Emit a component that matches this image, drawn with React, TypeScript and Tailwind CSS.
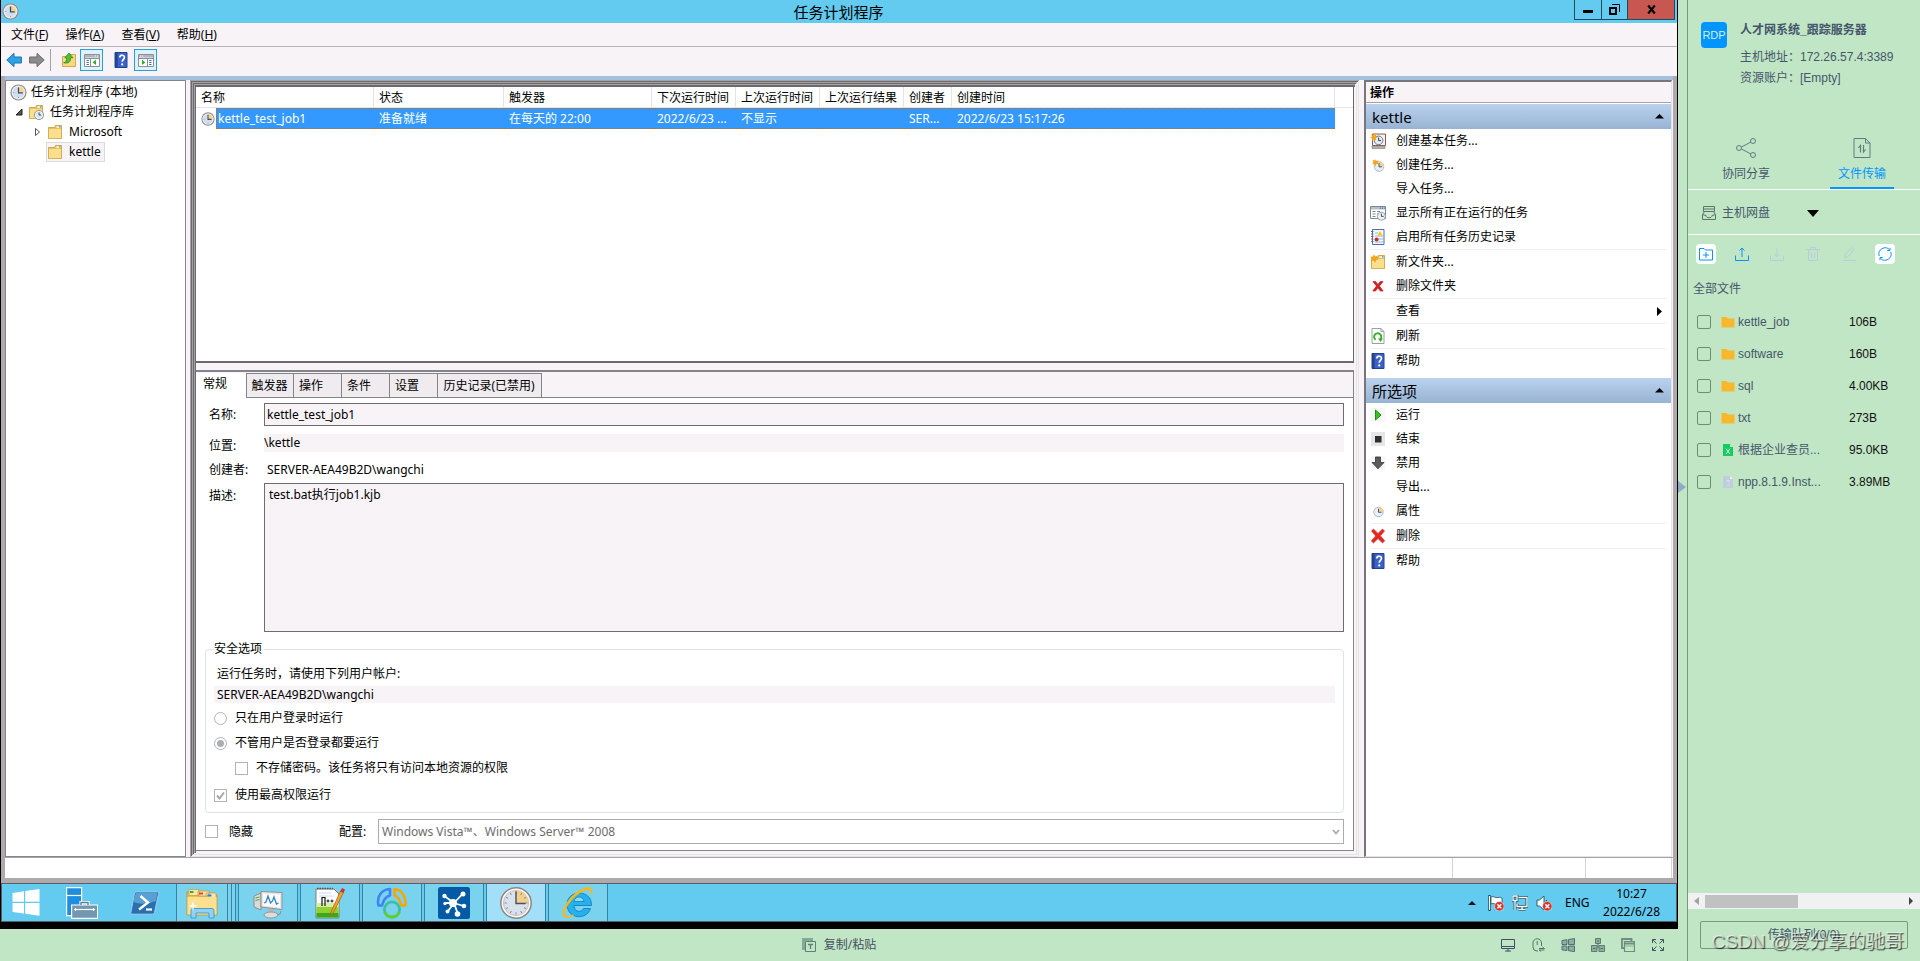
import React from 'react';
import clsx from 'clsx';

type IconProps = { className?: string };

function Svg({ size = 16, box = 16, className, children }: { size?: number; box?: number; className?: string; children: React.ReactNode }) {
  return (
    <svg width={size} height={size} viewBox={`0 0 ${box} ${box}`} fill="none" className={clsx('shrink-0', className)} aria-hidden="true">
      {children}
    </svg>
  );
}

/* ---------- small 16px icons ---------- */

function ClockIcon({ size = 16, className }: IconProps & { size?: number }) {
  return (
    <Svg size={size} className={className}>
      <circle cx="8" cy="8" r="7.600" fill="#8f8b88" />
      <circle cx="8" cy="8" r="6.500" fill="#efeded" />
      <circle cx="8" cy="8" r="5.400" fill="#cfdff0" />
      <path d="M8 8V2.600A5.400 5.400 0 0 1 13.400 8Z" fill="#f6d68a" />
      <path d="M8 3.200V8.400H12" stroke="#3d4a66" strokeWidth="1.200" />
      <path d="M8 12.200v1M3 8h1" stroke="#8a8f9c" strokeWidth=".8" />
    </Svg>
  );
}

function FolderIcon({ clock, star }: { clock?: boolean; star?: boolean }) {
  return (
    <Svg>
      <path d="M1.500 3.500h6l1-2h6v13h-13z" fill="#e9c25c" stroke="#c79b35" strokeWidth=".8" />
      <path d="M9.500 2.300h4.400v1.400H9.500z" fill="#fff" />
      <path d="M12 2.300h1.600v1.200H12z" fill="#3a8de0" />
      <path d="M1.900 5h12.200v9.200H1.900z" fill="#fadf8f" />
      {clock && (
        <g>
          <circle cx="11" cy="11" r="4.600" fill="#f5f5f3" stroke="#8b8b88" strokeWidth=".9" />
          <circle cx="11" cy="11" r="3.200" fill="#d7e8f5" />
          <path d="M11 8.400V11h2.200" stroke="#2d3f5d" strokeWidth=".9" />
        </g>
      )}
      {star && <path d="M4 0l1 2.600L7.600 1.400 6.500 4 9 5 6.400 6 5 9 3.800 6.600 1 7.200l1.200-2.400L.4 2.600l2.600.2z" fill="#f7a31a" />}
    </Svg>
  );
}

function HelpIcon() {
  return (
    <Svg>
      <path d="M2 .5h12v15H2z" fill="#3b62c9" stroke="#24428f" />
      <path d="M2 .5h2.600v15H2z" fill="#24428f" />
      <path d="M6.800 5.400c0-3 4.600-2.800 4.600 0 0 2-2.200 2-2.200 4.400" stroke="#fff" strokeWidth="1.700" />
      <circle cx="9.200" cy="12.400" r="1.100" fill="#fff" />
    </Svg>
  );
}

function PanelIcon({ flip }: { flip?: boolean }) {
  return (
    <Svg className={flip ? '-scale-x-100' : undefined}>
      <path d="M.5 2.500h15v12H.5z" fill="#fff" stroke="#8b9098" />
      <path d="M1 3h14v2.600H1z" fill="#aeb6c1" />
      <path d="M11 4h1M13 4h1" stroke="#fff" />
      <path d="M1 6.500h14M6.500 7v7" stroke="#8b9098" />
      <path d="M2.500 8.500h2.400M2.500 10.500h2.400M2.500 12.500h2.400" stroke="#3f73b8" />
      <path d="M12 7.800v5.200L8.600 10.400z" fill="#2fae29" />
    </Svg>
  );
}

function ArrowIcon({ flip, color, edge }: { flip?: boolean; color: string; edge: string }) {
  return (
    <Svg className={flip ? '-scale-x-100' : undefined}>
      <path d="M.8 8L8 1.400V5h7.400v6H8v3.600z" fill={color} stroke={edge} />
    </Svg>
  );
}

function UpFolderIcon() {
  return (
    <Svg>
      <path d="M1.500 4.500h7l1-2h5v12h-13z" fill="#f8d982" stroke="#c79b35" strokeWidth=".8" />
      <path d="M2.600 10.800c2.600-.4 3.200-2.400 3-5H3.800L8 1l4 4.800H9.600c.2 4-2 6-7 5z" fill="#4fc130" stroke="#23831a" strokeWidth=".7" />
    </Svg>
  );
}

function WizardIcon() {
  return (
    <Svg>
      <path d="M2.500 1h13v11.500h-13z" fill="#f4f1ee" stroke="#8c5a50" />
      <path d="M2 13h13v2.500H2z" fill="#b5b2b0" stroke="#7d7a78" strokeWidth=".6" />
      <circle cx="8.600" cy="7.400" r="4.300" fill="#e3edf6" stroke="#6f7d8c" />
      <path d="M8.600 4.600v3h2.400" stroke="#2d3f5d" />
      <path d="M3.500 0l.9 2.200 2.200-.9-.9 2.200 2.100 1-2.200.7.5 2.300-2.200-1.200L2 8l.2-2.500L0 4.600l2-1L1.200 1.300l2 .9z" fill="#f7a31a" />
    </Svg>
  );
}

function NewTaskIcon() {
  return (
    <Svg>
      <circle cx="9" cy="9.500" r="4.800" fill="#e7eef5" stroke="#b0b9c4" />
      <path d="M9 9.500V4.700a4.800 4.800 0 0 1 4.800 4.800z" fill="#f5d48b" />
      <path d="M9 6v3.800h3" stroke="#46546c" />
      <path d="M5 2l1 2 2.400-.8L7.600 5.400 9 7 6.400 7 5.400 9.500 4.400 7 2.200 7.200 3.500 5 2.500 2.800 4.500 3.600z" fill="#f7a31a" />
    </Svg>
  );
}

function RunningIcon() {
  return (
    <Svg>
      <path d="M.5 1.500h15v12H.5z" fill="#fff" stroke="#7c8794" />
      <path d="M1 2h14v2.500H1z" fill="#b4bfcc" />
      <path d="M10 3.200h1M12 3.200h1M14 3.200h.600" stroke="#2b5fa8" />
      <path d="M2.500 6.500h3M7 6.500h3M2.500 9h3M7 9h2M2.500 11.500h3" stroke="#7c8794" />
      <circle cx="11.400" cy="11.200" r="4" fill="#edf2f6" stroke="#8a9099" strokeWidth=".8" />
      <path d="M11.400 8.600v2.800h2.300" stroke="#2d3f5d" strokeWidth=".9" />
    </Svg>
  );
}

function HistoryIcon() {
  return (
    <Svg>
      <path d="M2.500.5h11.500v15H2.500z" fill="#f4f8fd" stroke="#4a71ad" />
      <path d="M1 2.500h2.500M1 5h2.500M1 7.500h2.500M1 10h2.500M1 12.500h2.500" stroke="#66727f" />
      <path d="M5 4h3M5 7h8M5 10h8M5 13h8" stroke="#7ea2d4" strokeWidth=".8" />
      <path d="M10 2l2.800 4.600H7.200z" fill="#f5cb23" />
      <circle cx="6.600" cy="10.600" r="2" fill="#d6262c" />
    </Svg>
  );
}

function RefreshPageIcon() {
  return (
    <Svg>
      <path d="M2 .5h9l3 3v12H2z" fill="#fff" stroke="#9aa0a6" />
      <path d="M11 .5v3h3" stroke="#9aa0a6" />
      <path d="M5.600 11.800A3.600 3.600 0 1 1 10.600 11" stroke="#33b226" strokeWidth="1.900" />
      <path d="M8 10.200l5 .2-2.500 3.600z" fill="#33b226" />
    </Svg>
  );
}

function CrossIcon({ big }: { big?: boolean }) {
  return (
    <Svg>
      {big ? (
        <path d="M1.500 3l2-2L8 5.400 12.500 1l2 2-4.100 4.800 4.300 5-2.200 2.200L8 10.600 3.500 15l-2.200-2 4.300-5.100z" fill="#e8261d" stroke="#c2423c" strokeWidth=".7" />
      ) : (
        <path d="M3 3.600h2.600l2.300 3 2.400-3H13l-3.600 4.500 3.700 4.900h-2.700L7.900 9.800 5.500 13H2.800l3.700-4.900z" fill="#cf2020" stroke="#cf2020" strokeWidth=".8" />
      )}
    </Svg>
  );
}

function PlayIcon() {
  return (
    <Svg>
      <path d="M1 1h14v14H1z" fill="#f7f7f7" />
      <path d="M5.500 3l5.500 5-5.500 5z" fill="#37c423" stroke="#228a16" />
    </Svg>
  );
}

function StopIcon() {
  return (
    <Svg>
      <path d="M1 1h14v14H1z" fill="#e6e6e6" />
      <path d="M5 5h6.500v6.500H5z" fill="#2f2f2f" />
    </Svg>
  );
}

function DisableIcon() {
  return (
    <Svg>
      <path d="M1 1h14v14H1z" fill="#f7f7f7" />
      <path d="M5.500 2h5v5.500h3.500L8 13.800 2 7.500h3.500z" fill="#5b5b5b" stroke="#333" strokeWidth=".8" />
    </Svg>
  );
}

function TinyClockIcon() {
  return (
    <Svg>
      <circle cx="8.500" cy="9" r="4.700" fill="#eaf1f8" stroke="#aab8c8" />
      <path d="M8.500 9V4.300A4.700 4.700 0 0 1 13.200 9z" fill="#f5d48b" />
      <path d="M8.500 5.800v3.500h3" stroke="#3c5684" />
    </Svg>
  );
}

/* ---------- task bar icons ---------- */

function WindowsLogo() {
  return (
    <svg width="28" height="27" viewBox="0 0 28 27" aria-hidden="true">
      <path d="M.5 4L12 2.200V12.800H.5zM13.200 2L27.500 0v12.800H13.200zM.5 14H12v10.600L.5 23zM13.200 14H27.500v12.800l-14.300-2z" fill="#fff" />
    </svg>
  );
}

function ServerManagerIcon() {
  return (
    <Svg size={32} box={32}>
      <path d="M.6.6h15v28H.6z" fill="#1e8fe0" stroke="#fff" strokeWidth="1.200" />
      <path d="M1 8.500h14" stroke="#fff" strokeWidth="1.200" />
      <path d="M15 18v-2.500h7V18" stroke="#fff" strokeWidth="3.200" />
      <path d="M5.600 18h26v13.400h-26z" fill="#7596af" stroke="#fff" strokeWidth="1.200" />
      <path d="M15 18v-2.500h7V18" stroke="#5d7d95" strokeWidth="1.400" />
      <path d="M8 22.500h21" stroke="#fff" strokeWidth="1.200" />
      <path d="M9.500 21v3M27.500 21v3" stroke="#fff" strokeWidth="1.200" />
    </Svg>
  );
}

function PowerShellIcon() {
  return (
    <svg width="30" height="24" viewBox="0 0 30 24" fill="none" aria-hidden="true">
      <path d="M6 .8h21.500q1.500 0 1.200 1.500L24.500 21.500q-.4 1.700-2 1.700H2q-1.500 0-1.200-1.500L4.500 2.300Q4.800.8 6 .8z" fill="#2a6fae" stroke="#9fd0f0" />
      <path d="M6 1.500h21.500L26 10Q14 15 3 11z" fill="#5a9fd2" />
      <path d="M10.500 5l7.500 6.500-9 7" stroke="#fff" strokeWidth="2.400" />
      <path d="M16 18.500h6" stroke="#fff" strokeWidth="2.200" />
    </svg>
  );
}

function ExplorerIcon() {
  return (
    <Svg size={32} box={32}>
      <path d="M1 5h12l2 3h16v20H1z" fill="#e8bf57" stroke="#b98f30" strokeWidth=".8" />
      <path d="M3 2.500h10v6H3zM12 4h11v5H12zM20 6h10v5H20z" fill="#fbe7a8" stroke="#c8a041" strokeWidth=".8" />
      <path d="M4 4h3.500v2H4z" fill="#25b03a" />
      <path d="M13 5.500h4v2h-4z" fill="#e0452b" />
      <path d="M21.500 7.500h4v2h-4z" fill="#2b7de0" />
      <path d="M1.500 10h29v17.500h-29z" fill="#fbe08f" />
      <path d="M5 31v-7.500q0-2 2-2h19q2 0 2 2V31h-5v-5H10v5z" fill="#8fd3f3" stroke="#4b9dcc" />
      <path d="M7 14l1 4 4 1-4 1-1 4-1-4-4-1 4-1z" fill="#fff" />
    </Svg>
  );
}

function MonitorChartIcon() {
  return (
    <Svg size={32} box={32}>
      <path d="M2 9l7-3v17l-7-3z" fill="#d9d9d9" stroke="#8e8e8e" />
      <path d="M3.500 11l4-1M3.500 13.500l4-1" stroke="#4da83d" />
      <path d="M9 4.500l21 1v17L9 20z" fill="#e6e6e6" stroke="#909090" />
      <path d="M11 6.500L28 7.500v13L11 18.500z" fill="#f8fbff" />
      <path d="M12 16l2-1 2-6 2.500 7 2-2 1.500-4 2.500 7 2-1" stroke="#3a84c9" strokeWidth="1.300" />
      <path d="M16 22h6v4h-6z" fill="#b6b6b6" />
      <ellipse cx="19" cy="28" rx="7" ry="3" fill="#dcdcdc" stroke="#999" />
      <path d="M25 28q4 0 4-4" stroke="#8e8e8e" />
    </Svg>
  );
}

function NotepadPlusIcon() {
  return (
    <Svg size={32} box={32}>
      <path d="M2 2h18l5 5v24H2z" fill="#fff" stroke="#7e7e7e" />
      <path d="M2.500 16h22v5.500h-22z" fill="#d6efa6" />
      <path d="M2.500 20h22v10.500h-22z" fill="#8fd12f" />
      <path d="M2.500 26h22v4.500h-22z" fill="#3fa51e" />
      <path d="M3 1.500h16" stroke="#555" strokeWidth="1.500" strokeDasharray="1.500 1" />
      <path d="M5 6h12M5 9h15" stroke="#b9d0e8" strokeWidth=".8" />
      <path d="M8 19v-8.500h3V19" stroke="#111" strokeWidth="1.200" />
      <path d="M12.500 14h3M14 12.500v3M16.500 14h3M18 12.500v3" stroke="#111" />
      <path d="M26.500 4l3 1.500L19 26l-2 1.500V25z" fill="#f2a52c" stroke="#a86415" strokeWidth=".8" />
      <path d="M28 1l3 1.500-1.500 3.500-3.300-1.500z" fill="#d12f3a" />
    </Svg>
  );
}

function NavicatIcon() {
  return (
    <Svg size={32} box={32}>
      <path d="M2.500 18.500C.5 10 5 2.500 14 2V8.500c-4 1-6.500 4-8 10z" stroke="#3d84f5" strokeWidth="2.600" strokeLinejoin="round" />
      <path d="M18.500 2c7 .5 11.500 7.500 11 16.500h-4C24 13 21.500 9.500 18.500 8.500z" stroke="#f7a600" strokeWidth="2.600" strokeLinejoin="round" />
      <circle cx="16" cy="22.500" r="7.600" stroke="#3dbfa0" strokeWidth="2.800" />
      <path d="M8.900 25.200a7.600 7.600 0 0 0 14.200 0" stroke="#5fcf2a" strokeWidth="2.800" />
    </Svg>
  );
}

function NodesIcon() {
  return (
    <Svg size={32} box={32}>
      <rect width="32" height="32" rx="2.500" fill="#045aa5" />
      <path d="M16 16L7 9.500M16 16l8-8.500M16 16H8M16 16l9.500 3M16 16l-6 8M16 16l3.500 10" stroke="#fff" strokeWidth="1.800" />
      <circle cx="15" cy="16" r="4" fill="#fff" />
      <circle cx="6.500" cy="9" r="2.200" fill="#fff" />
      <circle cx="25" cy="7" r="2.500" fill="#fff" />
      <circle cx="7" cy="16.500" r="1.700" fill="#fff" />
      <circle cx="26" cy="19" r="2.300" fill="#fff" />
      <circle cx="9.500" cy="24.500" r="2" fill="#fff" />
      <circle cx="19.500" cy="27" r="2.800" fill="#fff" />
    </Svg>
  );
}

function BigClockIcon() {
  const ticks = Array.from({ length: 12 }, (_, i) => i * 30);
  return (
    <Svg size={32} box={32}>
      <circle cx="16" cy="16" r="15.200" fill="#fbfbfb" stroke="#8d857d" strokeWidth="1.500" />
      <circle cx="16" cy="16" r="12.600" fill="#d9e1ec" stroke="#b9b4ae" strokeWidth=".8" />
      <path d="M16 16V3.500A12.500 12.500 0 0 1 28.500 16z" fill="#f0d08a" />
      {ticks.map((a) => (
        <path key={a} d="M16 4.500v2.200" stroke="#8b8b94" transform={`rotate(${a} 16 16)`} />
      ))}
      <path d="M16 4.500V16.500h9.500" stroke="#4a4f63" strokeWidth="1.400" />
    </Svg>
  );
}

function IeIcon() {
  return (
    <Svg size={32} box={32}>
      <path d="M28.500 21.500C24.500 34 5 32 5 17.500 5 2.500 30 1.500 29.500 18.500H12C12.500 26 20 25.500 21.500 21.500z" fill="#25b0ee" stroke="#1279b8" strokeWidth=".8" />
      <path d="M12 14.500h10c-.8-6-9.200-6-10 0z" fill="#8fd9f5" stroke="#1279b8" strokeWidth=".7" />
      <path d="M3 29.500C-2 25 9 8 22 2.500c6-2.500 8-.5 7 4" stroke="#f5b81f" strokeWidth="2.600" />
      <path d="M3 29.500c2.500 1.500 6 0 8.500-1.500" stroke="#f5b81f" strokeWidth="1.600" />
    </Svg>
  );
}

function ErrorBadge() {
  return (
    <g>
      <circle cx="11.300" cy="11.300" r="4.700" fill="#dd2f25" stroke="#fff" strokeWidth=".5" />
      <path d="M9.300 9.300l4 4M13.300 9.300l-4 4" stroke="#fff" strokeWidth="1.500" />
    </g>
  );
}

/* ---------- remote window ---------- */

const menus: [string, string][] = [['文件', 'F'], ['操作', 'A'], ['查看', 'V'], ['帮助', 'H']];

function TitleBar() {
  return (
    <header className="flex h-[23px] items-start bg-[#63cbf0]">
      <div className="flex h-full w-[102px] items-center pl-px"><ClockIcon size={17} /></div>
      <h1 className="min-w-0 flex-1 self-center text-center text-[15px] leading-5">任务计划程序</h1>
      <div className="flex h-5 border border-t-0 border-[#1f4b5c]">
        <button aria-label="最小化" className="flex w-[27px] items-center justify-center border-r border-[#1f4b5c]">
          <span className="mt-1 h-[3px] w-[10px] bg-black" />
        </button>
        <button aria-label="还原" className="flex w-[26px] items-center justify-center border-r border-[#1f4b5c]">
          <Svg size={11} box={11}>
            <path d="M1 4h6v6H1z" stroke="#000" strokeWidth="2" />
            <path d="M3 .5h7.500V8" stroke="#000" />
          </Svg>
        </button>
        <button aria-label="关闭" className="flex w-[46px] items-center justify-center bg-[#c75750]">
          <Svg size={9} box={9}><path d="M1.200.5l6.600 8M7.800.5l-6.600 8" stroke="#000" strokeWidth="2.200" /></Svg>
        </button>
      </div>
      <div className="w-[2px]" />
    </header>
  );
}

function Toolbar() {
  const pressed = 'flex h-[22px] w-[23px] items-center justify-center border border-[#26a0da] bg-[#dff1f9]';
  return (
    <div className="flex h-[29px] items-center pb-1 pl-[5px]">
      <button aria-label="后退" className="w-[23px]"><ArrowIcon color="#2fa2e6" edge="#1c71b8" /></button>
      <button aria-label="前进" className="w-[21px]"><ArrowIcon flip color="#8b8b8b" edge="#6a6a6a" /></button>
      <span className="h-[22px] w-px bg-[#a5a3a5]" />
      <button aria-label="上移" className="ml-2 w-[21px] pl-[2px]"><UpFolderIcon /></button>
      <button aria-label="显示/隐藏控制台树" className={pressed}><PanelIcon /></button>
      <button aria-label="帮助" className="ml-[10px] w-[21px]"><HelpIcon /></button>
      <button aria-label="显示/隐藏操作窗格" className={pressed}><PanelIcon flip /></button>
    </div>
  );
}

function Tree() {
  return (
    <nav className="w-[181px] shrink-0 border border-[#85848f] bg-white pt-px">
      <ul className="leading-5">
        <li className="flex h-5 items-center gap-1 pl-1"><ClockIcon size={17} />任务计划程序 (本地)</li>
        <li className="flex h-5 items-center pl-[9px]">
          <Svg size={8} box={8}><path d="M7 1v6H1z" fill="#555" stroke="#222" /></Svg>
          <span className="ml-[5px] mr-[6px]"><FolderIcon clock /></span>任务计划程序库
        </li>
        <li className="flex h-5 items-center pl-[28px]">
          <Svg size={8} box={8}><path d="M1.500.5l4 3.500-4 3.500z" fill="#fff" stroke="#555" /></Svg>
          <span className="ml-[5px] mr-[6px]"><FolderIcon /></span>Microsoft
        </li>
        <li className="ml-10 flex h-5 w-[59px] items-center gap-[6px] border border-[#dcdadc] bg-[#f7f3f7]"><FolderIcon />kettle</li>
      </ul>
    </nav>
  );
}

const columns = [
  { name: '名称', width: 'w-[178px]', value: 'kettle_test_job1' },
  { name: '状态', width: 'w-[130px]', value: '准备就绪' },
  { name: '触发器', width: 'w-[148px]', value: '在每天的 22:00' },
  { name: '下次运行时间', width: 'w-[84px]', value: '2022/6/23 ...' },
  { name: '上次运行时间', width: 'w-[84px]', value: '不显示' },
  { name: '上次运行结果', width: 'w-[84px]', value: '' },
  { name: '创建者', width: 'w-[48px]', value: 'SER...' },
  { name: '创建时间', width: 'w-[383px]', value: '2022/6/23 15:17:26' },
];

function TaskList() {
  return (
    <section className="min-h-0 flex-1 overflow-hidden border-b-2 border-r border-[#6b696b] bg-white">
      <table className="w-full table-fixed border-separate border-spacing-0 text-left whitespace-nowrap">
        <thead>
          <tr className="h-[21px]">
            {columns.map((c) => (
              <th key={c.name} scope="col" className={clsx(c.width, 'border-b border-r border-[#e5e3e5] p-0 pl-[5px] pt-[2px] font-normal leading-[18px]')}>{c.name}</th>
            ))}
            <td className="border-b border-[#e5e3e5] p-0" />
          </tr>
        </thead>
        <tbody>
          <tr className="h-[21px] text-white">
            {columns.map((c, i) =>
              i === 0 ? (
                <td key={c.name} className="p-0">
                  <div className="flex h-[21px] items-center">
                    <span className="flex w-5 justify-center pl-1"><ClockIcon size={14} /></span>
                    <span className="h-full flex-1 border-y border-l border-dotted border-[#c96a1b] bg-[#3399ff] pl-px leading-[19px]">{c.value}</span>
                  </div>
                </td>
              ) : (
                <td key={c.name} className="border-y border-dotted border-[#c96a1b] bg-[#3399ff] p-0 pl-[5px] leading-[19px]">{c.value}</td>
              ),
            )}
          </tr>
        </tbody>
      </table>
    </section>
  );
}

const detailTabs = [
  { name: '触发器', width: 'w-[47px]' },
  { name: '操作', width: 'w-12' },
  { name: '条件', width: 'w-12' },
  { name: '设置', width: 'w-12' },
  { name: '历史记录(已禁用)', width: 'w-[104px]' },
];

function Choice({ id, label, type, checked, name, className }: { id: string; label: string; type: 'radio' | 'checkbox'; checked?: boolean; name?: string; className?: string }) {
  return (
    <div className={clsx('flex h-4 items-center gap-2', className)}>
      <span className="relative flex">
        <input
          id={id}
          type={type}
          name={name}
          defaultChecked={checked}
          className={clsx('peer h-[13px] w-[13px] appearance-none border border-[#b0b4b8] bg-white', type === 'radio' && 'rounded-full')}
        />
        {type === 'radio' ? (
          <span className="pointer-events-none absolute inset-[3px] hidden rounded-full bg-[#aaafb3] peer-checked:block" />
        ) : (
          <svg className="pointer-events-none absolute inset-0 hidden peer-checked:block" width="13" height="13" viewBox="0 0 13 13" fill="none">
            <path d="M3 6.500l2.500 3L10 3.500" stroke="#a4a8ac" strokeWidth="2" />
          </svg>
        )}
      </span>
      <label htmlFor={id}>{label}</label>
    </div>
  );
}

function Details() {
  return (
    <section className="mt-[7px] shrink-0 border-b border-r border-t-2 border-[#85848a] bg-[#f7f3f7]">
      <div role="tablist" className="flex h-[25px] items-end">
        <button role="tab" aria-selected="true" className="z-10 -mb-px h-[25px] w-[51px] self-end border-r border-[#85848a] bg-white pb-1 pr-3">常规</button>
        {detailTabs.map((t) => (
          <button key={t.name} role="tab" aria-selected="false" className={clsx(t.width, 'h-6 whitespace-nowrap border-r border-t border-[#85848a] bg-[#efebef]', t.name.length === 2 ? 'pr-[13px]' : 'pr-px')}>{t.name}</button>
        ))}
      </div>
      <div className="border-t border-[#85848a] bg-white pb-[6px] pl-[9px] pr-[9px] pt-[5px]">
        <div className="flex h-[23px] items-center pl-1">
          <label htmlFor="task-name" className="w-[55px] shrink-0 pt-px">名称:</label>
          <input id="task-name" readOnly defaultValue="kettle_test_job1" className="h-full min-w-0 flex-1 border border-[#6f6d6f] bg-[#f7f3f7] px-[2px]" />
        </div>
        <div className="mt-2 flex h-[18px] items-center pl-1">
          <span className="w-[55px] shrink-0 pt-[6px]">位置:</span>
          <span className="h-full min-w-0 flex-1 bg-[#f7f3f7] leading-[18px]">\kettle</span>
        </div>
        <div className="mt-[9px] flex h-[18px] items-center pl-1">
          <span className="w-[55px] shrink-0">创建者:</span>
          <span className="pl-[3px]">SERVER-AEA49B2D\wangchi</span>
        </div>
        <div className="mt-1 flex pl-1">
          <label htmlFor="task-desc" className="w-[55px] shrink-0 pt-1">描述:</label>
          <textarea id="task-desc" readOnly defaultValue="test.bat执行job1.kjb" className="h-[149px] min-w-0 flex-1 resize-none border border-[#6f6d6f] bg-[#f7f3f7] px-1 py-[2px] leading-[18px]" />
        </div>
        <fieldset className="mt-[9px] h-[172px] min-w-0 rounded-sm border border-[#dde3ea] pl-2">
          <legend className="h-4 pr-[2px] leading-4">安全选项</legend>
          <p className="mt-[9px] h-4 pl-[3px] leading-4">运行任务时，请使用下列用户帐户:</p>
          <p className="mr-2 mt-1 h-[17px] bg-[#f7f3f7] pl-[3px] leading-[17px]">SERVER-AEA49B2D\wangchi</p>
          <Choice id="logon-only" type="radio" name="logon" label="只在用户登录时运行" className="mt-[7px]" />
          <Choice id="logon-any" type="radio" name="logon" checked label="不管用户是否登录都要运行" className="mt-[9px]" />
          <Choice id="no-password" type="checkbox" label="不存储密码。该任务将只有访问本地资源的权限" className="ml-[21px] mt-[9px]" />
          <Choice id="highest" type="checkbox" checked label="使用最高权限运行" className="mt-[11px]" />
        </fieldset>
        <div className="mt-[6px] flex h-[25px] items-center">
          <div className="w-[134px]"><Choice id="hidden-task" type="checkbox" label="隐藏" className="gap-[11px]" /></div>
          <label htmlFor="config" className="w-[39px]">配置:</label>
          <div className="relative h-full min-w-0 flex-1">
            <select id="config" className="h-full w-full appearance-none border border-[#acacac] bg-white px-[3px] text-[#6d6d6d]">
              <option>Windows Vista™、Windows Server™ 2008</option>
            </select>
            <svg className="pointer-events-none absolute right-1 top-[10px]" width="8" height="6" viewBox="0 0 8 6" fill="none"><path d="M1 1l3 3.500L7 1" stroke="#a9a9a9" strokeWidth="1.700" /></svg>
          </div>
        </div>
      </div>
    </section>
  );
}

type Action = { name: string; icon?: React.ReactNode; divider?: boolean; more?: boolean };

const folderActions: Action[] = [
  { name: '创建基本任务...', icon: <WizardIcon /> },
  { name: '创建任务...', icon: <NewTaskIcon /> },
  { name: '导入任务...' },
  { name: '显示所有正在运行的任务', icon: <RunningIcon /> },
  { name: '启用所有任务历史记录', icon: <HistoryIcon />, divider: true },
  { name: '新文件夹...', icon: <FolderIcon star /> },
  { name: '删除文件夹', icon: <CrossIcon />, divider: true },
  { name: '查看', divider: true, more: true },
  { name: '刷新', icon: <RefreshPageIcon />, divider: true },
  { name: '帮助', icon: <HelpIcon /> },
];

const itemActions: Action[] = [
  { name: '运行', icon: <PlayIcon /> },
  { name: '结束', icon: <StopIcon /> },
  { name: '禁用', icon: <DisableIcon /> },
  { name: '导出...' },
  { name: '属性', icon: <TinyClockIcon />, divider: true },
  { name: '删除', icon: <CrossIcon big />, divider: true },
  { name: '帮助', icon: <HelpIcon /> },
];

function ActionGroup({ title, items }: { title: string; items: Action[] }) {
  return (
    <div>
      <h3 className="flex h-[25px] items-center justify-between bg-linear-to-b from-[#bad2ee] to-[#98b3d3] pl-[6px] pr-[7px] text-[15px] leading-5">
        {title}
        <Svg size={9} box={9}><path d="M0 6.500L4.500 2 9 6.500z" fill="#000" /></Svg>
      </h3>
      <ul>
        {items.map((a) => (
          <li key={a.name} className={clsx('mx-1', a.divider && 'border-b border-[#f0f0f0]')}>
            <button className="flex h-6 w-full items-center text-left">
              <span className="w-[26px] shrink-0">{a.icon}</span>
              <span className="flex-1">{a.name}</span>
              {a.more && <Svg size={9} box={9} className="mr-[3px]"><path d="M2 0l5 4.500L2 9z" fill="#000" /></Svg>}
            </button>
          </li>
        ))}
      </ul>
    </div>
  );
}

function ActionsPane() {
  return (
    <aside className="ml-[5px] mr-px flex w-[308px] shrink-0 flex-col border-l-2 border-r border-t-2 border-b border-b-[#e5e3e5] border-l-[#78767a] border-r-[#e5e3e5] border-t-[#78767a] bg-white">
      <h2 className="mb-px h-[21px] border-b border-[#a5a3a5] bg-[#f7f3f7] pl-1 pt-[2px] font-bold leading-[18px]">操作</h2>
      <ActionGroup title="kettle" items={folderActions} />
      <div className="h-[5px]" />
      <ActionGroup title="所选项" items={itemActions} />
    </aside>
  );
}

const runningApps = [
  { name: '任务管理器', icon: <MonitorChartIcon /> },
  { name: 'Notepad++', icon: <NotepadPlusIcon /> },
  { name: 'Navicat', icon: <NavicatIcon /> },
  { name: 'Xmanager', icon: <NodesIcon /> },
  { name: '任务计划程序', icon: <BigClockIcon />, active: true },
  { name: 'Internet Explorer', icon: <IeIcon /> },
];

function Taskbar() {
  return (
    <footer className="flex h-[39px] shrink-0 border border-[#5a5f63] bg-[#63cbf0]">
      <button aria-label="开始" className="flex w-12 items-center justify-center"><WindowsLogo /></button>
      <button aria-label="服务器管理器" className="flex w-16 items-center justify-center"><ServerManagerIcon /></button>
      <button aria-label="PowerShell" className="flex w-[62px] items-center justify-center"><PowerShellIcon /></button>
      <div className="flex gap-[2px]">
        <div className="flex">
          <button aria-label="文件资源管理器" className="flex w-[52px] items-center justify-center border-x border-[#3583a0] bg-[#79d3ef]"><ExplorerIcon /></button>
          <span className="w-1 border-r border-[#3583a0] bg-[#79d3ef]" />
          <span className="w-1 border-r border-[#3583a0] bg-[#79d3ef]" />
        </div>
        {runningApps.map((a) => (
          <button key={a.name} aria-label={a.name} className={clsx('flex w-[60px] items-center justify-center border-x border-[#3583a0]', a.active ? 'bg-[#a2dff8]' : 'bg-[#79d3ef]')}>{a.icon}</button>
        ))}
      </div>
      <div className="ml-auto flex items-center text-[12px]">
        <button aria-label="显示隐藏的图标" className="mr-3"><Svg size={8} box={8}><path d="M0 6l4-4 4 4z" fill="#111" /></Svg></button>
        <div className="flex gap-2">
          <Svg>
            <path d="M1.500 0v16" stroke="#20505f" strokeWidth="2.400" />
            <path d="M1.500 1v14" stroke="#fff" />
            <path d="M3 2c3-1.500 4 1.500 7 .5 1.500-.5 3 0 4 .5v6c-3-1-5 1-7 0-1.500-.7-3-.5-4 0z" fill="#fff" stroke="#20505f" strokeWidth=".8" />
            <ErrorBadge />
          </Svg>
          <Svg>
            <path d="M6.500 2.500h8.500v9H5V9M10 11.500v3M6.500 14.500h7" stroke="#20505f" strokeWidth="3" />
            <path d="M1 1h4v4.500H1zM3 5.500V15" stroke="#20505f" strokeWidth="2.800" />
            <path d="M6.500 2.500h8.500v9H5V9M10 11.500v3M6.500 14.500h7M1 1h4v4.500H1zM3 5.500V15" stroke="#fff" strokeWidth="1.300" />
          </Svg>
          <Svg>
            <path d="M1 5h2.500L8 1v14l-4.500-4H1z" fill="#fff" stroke="#20505f" strokeWidth=".9" />
            <path d="M10 5q1.500 1.500 1.500 4" stroke="#20505f" />
            <ErrorBadge />
          </Svg>
        </div>
        <span className="ml-[13px] w-[38px]">ENG</span>
        <div className="mr-4 text-center leading-[18px]">
          <div>10:27</div>
          <div>2022/6/28</div>
        </div>
      </div>
    </footer>
  );
}

function RemoteDesktop() {
  return (
    <main className="flex min-h-0 flex-1 flex-col border-x border-b-[7px] border-black bg-[#f7f3f7]">
      <TitleBar />
      <nav className="flex h-6 shrink-0 items-center gap-[17px] border-b border-[#b5b3b5] pl-[10px]">
        {menus.map(([name, key]) => (
          <button key={key}>{name}(<span className="underline">{key}</span>)</button>
        ))}
      </nav>
      <Toolbar />
      <div className="flex min-h-0 flex-1 flex-col border-x-4 border-b-[5px] border-[#ada9ad]">
        <div className="h-1 shrink-0 bg-[#a5c0dc]" />
        <div className="flex min-h-0 flex-1">
          <Tree />
          <div className="ml-1 flex min-w-0 flex-1 flex-col bg-[#f7f3f7] pb-[6px] pl-[6px] pr-[5px] pt-[7px] shadow-[inset_1px_1px_0_#a5a3a5,inset_-1px_-1px_0_#e5e3e5,inset_2px_2px_0_#6b696b,inset_-2px_-2px_0_#f7f3f7,inset_3px_3px_0_#a5a3a5,inset_-3px_-3px_0_#e5e3e5,inset_4px_4px_0_#6b696b,inset_-4px_-4px_0_#f7f3f7,inset_5px_5px_0_#a5a3a5,inset_6px_7px_0_#6b696b]">
            <TaskList />
            <Details />
          </div>
          <ActionsPane />
        </div>
        <div className="flex h-[21px] shrink-0 justify-end border-t border-[#a5a3a5] bg-white">
          <span className="w-[133px] border-l border-[#d5d3d5]" />
          <span className="mr-px w-[87px] border-x border-[#d5d3d5]" />
        </div>
      </div>
      <Taskbar />
    </main>
  );
}

function ClientBar() {
  return (
    <div className="flex h-8 shrink-0 items-center text-[#46505f]">
      <div className="flex-1 pl-[13px]" />
      <button className="flex items-center gap-2 text-[12px]">
        <Svg size={14} box={14}>
          <path d="M0 0h11v3H3v9H0z" fill="#86a895" />
          <path d="M3.500 3.500h10v10h-10z" stroke="#5f7f78" />
          <path d="M6 6.500h5M8.500 6.500V11" stroke="#5f7f78" strokeWidth="1.300" />
        </Svg>
        复制/粘贴
      </button>
      <div className="flex flex-1 justify-end gap-4 pr-[13px]">
        <button aria-label="显示器"><Svg size={14} box={14}><path d="M.5 1.500h13v9H.5zM1 8.500h12M7 10.500v3M4 13h6" stroke="#3f5265" /></Svg></button>
        <button aria-label="鼠标"><Svg size={14} box={14}><path d="M7 13H6a4 4 0 0 1-4-4V5a4 4 0 0 1 8.500 0v3M6.200 3v4M8 10.500h5.500l-2-1.500M13.500 12H8l2 1.500" stroke="#5a7568" /></Svg></button>
        <button aria-label="Windows 键"><Svg size={14} box={14}><path d="M1 2.500l5-.8v4.800H1zM7.500 1.500l6-.9v5.900h-6zM1 8h5v4.500L1 12zM7.500 8h6v5.600l-6-.9z" fill="#8fae9d" stroke="#4c6672" strokeWidth=".9" /></Svg></button>
        <button aria-label="组合键"><Svg size={14} box={14}><path d="M4.500.5h5v5h-5zM.5 7.500h5.500v6H.5zM8 7.500h5.500v6H8z" fill="#8fae9d" stroke="#5f7d70" /><path d="M6 3h2M2 10.500h2.500M9.500 10.500H12M7 5.500v5" stroke="#4c6672" /></Svg></button>
        <button aria-label="窗口"><Svg size={14} box={14}><path d="M3.500 3.500h10v10h-10z" stroke="#6f8d80" strokeWidth="1.200" /><path d="M3 10H1V1h9.500v2M3.500 5.500h10" stroke="#6f8d80" strokeWidth="1.800" /><path d="M4 8h9" stroke="#8fae9d" /></Svg></button>
        <button aria-label="全屏"><Svg size={14} box={14}><path d="M1.500 5V1.500H5M9 1.500h3.500V5M12.500 9v3.500H9M5 12.500H1.500V9M2 2l3.500 3.500M12 2L8.500 5.500M12 12L8.500 8.500M2 12l3.500-3.500" stroke="#3f5265" /></Svg></button>
      </div>
    </div>
  );
}

/* ---------- file transfer panel ---------- */

function YellowFolder() {
  return <Svg size={14} box={14}><path d="M.5 2h5l1.200 1.500h6.800v9H.5z" fill="#f9b82c" /></Svg>;
}

function SheetIcon() {
  return (
    <Svg size={14} box={14}>
      <path d="M2 1h7l3 3v9H2z" fill="#14cb62" />
      <path d="M9 1l3 3H9z" fill="#c9f3da" />
      <path d="M5 5.500l4 5.500M9 5.500L5 11" stroke="#d9f7e5" />
    </Svg>
  );
}

function UnknownIcon() {
  return (
    <Svg size={14} box={14}>
      <path d="M2 1h7l3 3v9H2z" fill="#c0cddd" />
      <path d="M9 1l3 3H9z" fill="#eaf1f6" />
      <path d="M5.500 6.500c0-1.600 3-1.600 3 0 0 1.200-1.500 1.200-1.500 2.500M7 10v1" stroke="#d9e6ea" />
    </Svg>
  );
}

const files = [
  { name: 'kettle_job', size: '106B', icon: <YellowFolder /> },
  { name: 'software', size: '160B', icon: <YellowFolder /> },
  { name: 'sql', size: '4.00KB', icon: <YellowFolder /> },
  { name: 'txt', size: '273B', icon: <YellowFolder /> },
  { name: '根据企业查员...', size: '95.0KB', icon: <SheetIcon /> },
  { name: 'npp.8.1.9.Inst...', size: '3.89MB', icon: <UnknownIcon /> },
];

function FileTools() {
  return (
    <div className="flex h-[38px] items-center pl-2">
      <button aria-label="新建文件夹" className="flex h-5 w-5 items-center justify-center rounded-sm bg-white">
        <Svg size={14} box={14}><path d="M.5 1.500h4.500l1.500 1.500h7v10H.5zM7 5v6M4 8h6" stroke="#0a93f5" /></Svg>
      </button>
      <button aria-label="上传" className="ml-[19px] w-[35px]"><Svg size={14} box={14}><path d="M.5 8.500v5h13v-5M7 10V1M4.500 3.500L7 1l2.500 2.500" stroke="#0a93f5" /></Svg></button>
      <button aria-label="下载" className="w-[36px]"><Svg size={14} box={14}><path d="M.5 8.500v5h13v-5M7 1v8.500M4.500 7L7 9.500 9.500 7" stroke="#b9ccdc" /></Svg></button>
      <button aria-label="删除" className="w-[36px]"><Svg size={14} box={14}><path d="M0 2.500h14M4.500 2V.5h5V2M2.500 3v10.500h9V3M5.500 5.500V11M8.500 5.500V11" stroke="#b9ccdc" /></Svg></button>
      <button aria-label="重命名" className="w-[33px]"><Svg size={14} box={14}><path d="M2.500 10.500l.5-3L10 .7l2.300 2.300L5.500 10zM8.500 2.500L11 5M1 13.500h13" stroke="#b9ccdc" /></Svg></button>
      <button aria-label="刷新" className="flex h-5 w-5 items-center justify-center rounded-sm bg-white">
        <Svg size={14} box={14}><path d="M1.200 9A6.200 6.200 0 0 1 11.500 2.700M12.800 5A6.200 6.200 0 0 1 2.500 11.300M12 .8v2.700H9.300M2 13.200v-2.700h2.700" stroke="#0a93f5" /></Svg>
      </button>
    </div>
  );
}

function FilePanel() {
  return (
    <aside className="flex w-[242px] shrink-0 font-['Liberation_Sans','Noto_Sans_CJK_SC',sans-serif] text-[#45566b]">
      <div className="flex w-[9px] items-center">
        <button aria-label="收起面板"><svg width="8" height="12" viewBox="0 0 8 12" className="mt-3 block"><path d="M0 0l8 6-8 6z" fill="#93a8c4" /></svg></button>
      </div>
      <div className="relative flex min-w-0 flex-1 flex-col border-l border-[#7b987f]">
        <div className="flex h-[126px] gap-[13px] pl-[13px] pt-[22px]">
          <span className="flex h-[26px] w-[26px] shrink-0 items-center justify-center rounded bg-[#0095ff] text-[11px] text-[#d3f0e8]">RDP</span>
          <div>
            <h2 className="h-[18px] text-[12px] font-bold leading-4">人才网系统_跟踪服务器</h2>
            <p className="mt-2 leading-[18px]">主机地址：172.26.57.4:3389</p>
            <p className="mt-[3px] leading-[18px]">资源账户：[Empty]</p>
          </div>
        </div>
        <div className="flex border-b border-white">
          <button className="flex h-[63px] w-[116px] flex-col items-center pt-3">
            <Svg size={20} box={20}><path d="M5.500 9L15 4M5.500 11L15 16" stroke="#5f7d80" /><circle cx="3" cy="10" r="2.500" stroke="#5f7d80" /><circle cx="17" cy="3" r="2.500" stroke="#5f7d80" /><circle cx="17" cy="17" r="2.500" stroke="#5f7d80" /></Svg>
            <span className="mt-2 leading-4">协同分享</span>
          </button>
          <button className="ml-[26px] flex h-[63px] w-16 flex-col items-center border-b-2 border-[#0095ff] pt-3 text-[#0095ff]">
            <Svg size={20} box={20}><path d="M2 .5h11.500L18 5v14.500H2zM13.500.5V5H18" stroke="#5f7d80" /><path d="M8.500 14.500V7.500L6.500 10M11.500 7v7l2-2.500" stroke="#5f7d80" strokeWidth="1.200" /></Svg>
            <span className="mt-2 leading-4">文件传输</span>
          </button>
        </div>
        <div className="flex h-[45px] items-center border-b border-white pl-[14px] pt-px">
          <Svg size={14} box={14}><path d="M1.500.5h11v5h-11zM.5 13.500v-5L4 9.500c0 3 6 3 6 0l3.500-1v5zM1.500 3h11M.5 8.500l2-3M13.500 8.500l-2-3" stroke="#5d7568" /></Svg>
          <span className="ml-[6px] w-[85px]">主机网盘</span>
          <button aria-label="选择网盘"><svg width="12" height="8" viewBox="0 0 12 8" className="block"><path d="M0 1h12L6 8z" fill="#000" /></svg></button>
        </div>
        <FileTools />
        <p className="mt-2 h-[18px] pl-[5px] leading-4">全部文件</p>
        <ul className="flex-1 pt-[7px]">
          {files.map((f, i) => (
            <li key={f.name} className="flex h-8 items-center pl-[9px]">
              <input type="checkbox" id={`file-${i}`} className="h-[14px] w-[14px] appearance-none rounded-xs border border-[#6f8c78]" />
              <span className="ml-[10px] mr-[3px]">{f.icon}</span>
              <label htmlFor={`file-${i}`} className="w-[111px]">{f.name}</label>
              <span className="text-[#111]">{f.size}</span>
            </li>
          ))}
        </ul>
        <div className="flex h-4 items-center justify-between bg-[#f1f1f1] px-[6px]">
          <Svg size={8} box={8}><path d="M5 0v8L0 4z" fill="#a3a3a3" /></Svg>
          <span className="ml-[3px] h-[13px] w-[93px] bg-[#c1c1c1]" />
          <span className="flex-1" />
          <Svg size={8} box={8}><path d="M3 0v8l4-4z" fill="#444" /></Svg>
        </div>
        <button className="mx-3 mb-3 mt-3 h-7 rounded-xs border border-[#7b987f]">传输队列(0/0)</button>
        <p className="absolute bottom-[5px] right-4 whitespace-nowrap text-[19px] leading-7 text-white/60 [text-shadow:1px_1px_1px_rgba(0,0,0,0.7)]">CSDN @爱分享的驰哥</p>
      </div>
    </aside>
  );
}

export default function App() {
  return (
    <div className="flex h-screen min-h-[760px] overflow-hidden bg-[#c1e6c5] font-['Noto_Sans','Noto_Sans_CJK_SC',sans-serif] text-[12px] text-black">
      <div className="flex min-w-0 flex-1 flex-col">
        <RemoteDesktop />
        <ClientBar />
      </div>
      <FilePanel />
    </div>
  );
}
